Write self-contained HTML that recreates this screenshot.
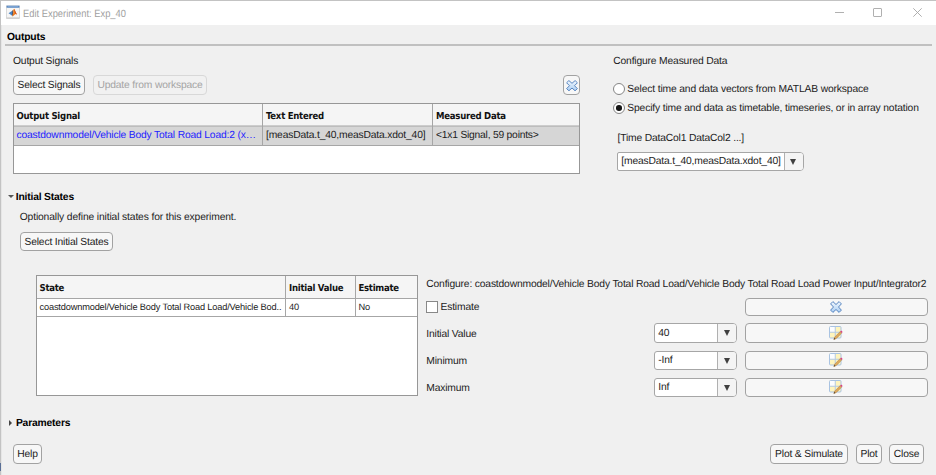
<!DOCTYPE html>
<html><head><meta charset="utf-8">
<style>
html,body{margin:0;padding:0;}
body{text-rendering:geometricPrecision;width:936px;height:475px;background:#f0f0f0;position:relative;overflow:hidden;font-family:"Liberation Sans",sans-serif;font-size:10.3px;letter-spacing:-0.17px;color:#1c1c1c;}
.abs{position:absolute;white-space:nowrap;line-height:12px;}
.b{font-weight:bold;color:#000;}
.btn{position:absolute;box-sizing:border-box;border:1px solid #a2a2a2;border-radius:4px;background:#f7f7f7;text-align:center;white-space:nowrap;color:#1c1c1c;}
.btn span{position:absolute;left:0;right:0;line-height:12px;}
.btn.dis{border-color:#d8d8d8;color:#a4a4a4;background:#f1f1f1;}
.tbl{position:absolute;box-sizing:border-box;border:1px solid #979797;background:#fff;}
.th{position:absolute;font-family:"DejaVu Sans Condensed","DejaVu Sans","Liberation Sans",sans-serif;font-weight:bold;font-size:9.5px;letter-spacing:-0.25px;color:#111;white-space:nowrap;line-height:12px;}
.vl{position:absolute;width:1px;background:#a6a6a6;}
.hl{position:absolute;height:1px;background:#a6a6a6;}
.combo{position:absolute;box-sizing:border-box;border:1px solid #a6a6a6;border-radius:3px 4px 4px 3px;background:#fff;overflow:hidden;}
.combo .dv{position:absolute;top:0;bottom:0;right:0;width:18px;border-left:1px solid #b0b0b0;background:#f4f4f4;}
.combo .ar{position:absolute;width:0;height:0;border-left:3.8px solid transparent;border-right:3.8px solid transparent;border-top:6.2px solid #404040;}
.combo .tx{position:absolute;left:3.3px;line-height:12px;white-space:nowrap;}
.radio{position:absolute;box-sizing:border-box;width:12px;height:12px;border:1px solid #858585;border-radius:50%;background:#fff;}
</style></head><body>
<!-- title bar -->
<div style="position:absolute;left:0;top:0;width:936px;height:25px;background:#fff;"></div>
<div style="position:absolute;left:0;top:0;width:936px;height:1px;background:#c3c3c3;"></div>
<div style="position:absolute;left:0;top:0;width:1px;height:475px;background:#c3c3c3;"></div>
<div style="position:absolute;left:1px;top:25px;width:1px;height:450px;background:#e6e6e6;"></div>
<div style="position:absolute;left:0;top:463px;width:1px;height:8px;background:#5a6f96;"></div>
<svg style="position:absolute;left:6px;top:5px" width="14" height="14" viewBox="0 0 14 14">
<rect x="0.5" y="0.9" width="13" height="12.4" fill="#f6f6f6" stroke="#d2d2d2" stroke-width="0.8"/>
<rect x="0.6" y="12.6" width="12.8" height="0.8" fill="#bdbdbd"/>
<rect x="0.6" y="0.7" width="12.8" height="2" fill="#4f80bd"/>
<rect x="1.6" y="1.3" width="10.6" height="0.6" fill="#93b7e3"/>
<path d="M2.5 8.2 L6.3 5.8 L7.2 7.5 L6 10.8 L4.5 9.4 Z" fill="#4a84c4"/>
<path d="M6.3 5.8 L7.3 4.8 L7.3 8 L6.4 11.2 L6 10.8 L6.6 7.6 Z" fill="#4a2f22"/>
<path d="M7.3 4.8 L8.4 3.7 L9.4 6.5 L10.9 9.6 L9.5 9 L8 10.2 L6.6 11.5 L6.4 11.2 L7.3 8 Z" fill="#ec7a1c"/>
<path d="M8.4 3.7 L9.4 6.5 L10.9 9.6 L9.7 9 L8.8 6.6 Z" fill="#c9441c"/>
</svg>
<div class="abs" id="title" style="left:23px;top:8px;font-size:10.5px;letter-spacing:0;color:#a0a0a0;transform:scaleX(0.891);transform-origin:0 50%;">Edit Experiment: Exp_40</div>
<!-- window controls -->
<div style="position:absolute;left:835px;top:12px;width:9px;height:1px;background:#b0b0b0;"></div>
<div style="position:absolute;left:873px;top:8px;width:9px;height:9px;box-sizing:border-box;border:1px solid #b0b0b0;border-radius:1px;"></div>
<svg style="position:absolute;left:913px;top:8px" width="9" height="9" viewBox="0 0 9 9"><path d="M0.3 0.3 L8.7 8.7 M8.7 0.3 L0.3 8.7" stroke="#a6a6a6" stroke-width="0.9" fill="none"/></svg>

<!-- Outputs -->
<div class="abs b" style="left:7px;top:32px;">Outputs</div>
<div style="position:absolute;left:5px;top:44px;width:927px;height:2px;background:#c0c0c0;"></div>
<div class="abs" style="left:13px;top:56px;">Output Signals</div>
<div class="btn" style="left:13px;top:75px;width:72px;height:20px;"><span style="top:4px">Select Signals</span></div>
<div class="btn dis" style="left:93px;top:75px;width:114px;height:20px;"><span style="top:4px">Update from workspace</span></div>
<div class="btn" style="left:563px;top:75px;width:17px;height:20px;">
<svg style="position:absolute;left:1.7px;top:3.7px" width="12" height="11.4" viewBox="0 0 12 12" preserveAspectRatio="none"><defs><linearGradient id="xg" x1="0" y1="0" x2="0" y2="1"><stop offset="0" stop-color="#f2f8fe"/><stop offset="1" stop-color="#a9cdf2"/></linearGradient></defs><path d="M2.9 0.6 L6 3.5 L9.1 0.6 L11.4 2.9 L8.5 6 L11.4 9.1 L9.1 11.4 L6 8.5 L2.9 11.4 L0.6 9.1 L3.5 6 L0.6 2.9 Z" fill="url(#xg)" stroke="#5583bf" stroke-width="1" stroke-linejoin="round"/></svg>
</div>

<!-- table 1 -->
<div class="tbl" style="left:13px;top:103px;width:567px;height:71px;"></div>
<div style="position:absolute;left:14px;top:104px;width:565px;height:22px;background:#f5f5f5;"></div>
<div style="position:absolute;left:14px;top:126px;width:565px;height:19px;background:#d6d6d6;"></div>
<div class="hl" style="left:14px;top:125px;width:565px;background:#cdcdcd"></div><div class="hl" style="left:14px;top:126px;width:565px;background:#bdbdbd"></div>
<div class="hl" style="left:14px;top:145px;width:565px;"></div>
<div class="vl" style="left:262px;top:104px;height:42px;"></div>
<div class="vl" style="left:432px;top:104px;height:42px;"></div>
<div class="th" style="left:16.5px;top:111px;">Output Signal</div>
<div class="th" style="left:266px;top:111px;">Text Entered</div>
<div class="th" style="left:436px;top:111px;">Measured Data</div>
<div class="abs" style="left:16.5px;top:130px;color:#1d1dff;">coastdownmodel/Vehicle Body Total Road Load:2 (x…</div>
<div class="abs" style="left:266px;top:130px;">[measData.t_40,measData.xdot_40]</div>
<div class="abs" style="left:436px;top:130px;letter-spacing:-0.22px">&lt;1x1 Signal, 59 points&gt;</div>

<!-- Configure measured data -->
<div class="abs" style="left:613.3px;top:56px;">Configure Measured Data</div>
<div class="radio" style="left:613px;top:83px;"></div>
<div class="abs" style="left:627.3px;top:84px;letter-spacing:-0.15px">Select time and data vectors from MATLAB workspace</div>
<div class="radio" style="left:613px;top:102px;"><div style="position:absolute;left:2.2px;top:2.2px;width:5.6px;height:5.6px;border-radius:50%;background:#161616;"></div></div>
<div class="abs" style="left:627.3px;top:103px;letter-spacing:-0.15px">Specify time and data as timetable, timeseries, or in array notation</div>
<div class="abs" style="left:617.5px;top:133px;">[Time DataCol1 DataCol2 ...]</div>
<div class="combo" style="left:617px;top:152px;width:187px;height:19px;border-radius:2px 4px 4px 2px;"><div class="tx" style="top:3px">[measData.t_40,measData.xdot_40]</div><div class="dv"></div><div class="ar" style="left:172.4px;top:5.7px;"></div></div>

<!-- Initial States -->
<div style="position:absolute;left:7.5px;top:195px;width:0;height:0;border-left:3px solid transparent;border-right:3px solid transparent;border-top:3.5px solid #555;"></div>
<div class="abs b" style="left:15.7px;top:192px;">Initial States</div>
<div class="abs" style="left:19.7px;top:212px;letter-spacing:-0.135px">Optionally define initial states for this experiment.</div>
<div class="btn" style="left:20px;top:232px;width:93px;height:19px;"><span style="top:4px">Select Initial States</span></div>

<!-- table 2 -->
<div class="tbl" style="left:36px;top:275px;width:382px;height:121px;"></div>
<div style="position:absolute;left:37px;top:276px;width:380px;height:22px;background:#f5f5f5;"></div>
<div class="hl" style="left:37px;top:298px;width:380px;"></div>
<div class="hl" style="left:37px;top:316px;width:380px;"></div>
<div class="vl" style="left:285px;top:276px;height:41px;"></div>
<div class="vl" style="left:355px;top:276px;height:41px;"></div>
<div class="th" style="left:39.5px;top:283px;">State</div>
<div class="th" style="left:289px;top:283px;">Initial Value</div>
<div class="th" style="left:358.4px;top:283px;">Estimate</div>
<div class="abs s" style="left:39.5px;top:301px;font-size:9.26px;letter-spacing:-0.175px;">coastdownmodel/Vehicle Body Total Road Load/Vehicle Bod..</div>
<div class="abs s" style="left:289px;top:301px;font-size:9.26px;letter-spacing:-0.175px;">40</div>
<div class="abs s" style="left:358.4px;top:301px;font-size:9.26px;letter-spacing:-0.175px;">No</div>

<!-- Configure state -->
<div class="abs" style="left:426.3px;top:279px;">Configure: coastdownmodel/Vehicle Body Total Road Load/Vehicle Body Total Road Load Power Input/Integrator2</div>
<div style="position:absolute;left:426px;top:301px;width:12px;height:12px;box-sizing:border-box;border:1px solid #888;background:#fff;"></div>
<div class="abs" style="left:440.5px;top:302px;">Estimate</div>
<div class="abs" style="left:426.3px;top:329px;">Initial Value</div>
<div class="abs" style="left:426.3px;top:356px;">Minimum</div>
<div class="abs" style="left:426.3px;top:383px;">Maximum</div>

<div class="combo" style="left:654px;top:323px;width:83px;height:20px;"><div class="tx" style="top:4px">40</div><div class="dv"></div><div class="ar" style="left:68.6px;top:6.2px;"></div></div>
<div class="combo" style="left:654px;top:351px;width:83px;height:19px;"><div class="tx" style="top:3px">-Inf</div><div class="dv"></div><div class="ar" style="left:68.6px;top:5.7px;"></div></div>
<div class="combo" style="left:654px;top:378px;width:83px;height:19px;"><div class="tx" style="top:3px">Inf</div><div class="dv"></div><div class="ar" style="left:68.6px;top:5.7px;"></div></div>

<div class="btn" style="left:745px;top:298px;width:183px;height:18px;">
<svg style="position:absolute;left:84.2px;top:2.1px" width="12" height="12" viewBox="0 0 12 12"><path d="M2.9 0.6 L6 3.5 L9.1 0.6 L11.4 2.9 L8.5 6 L11.4 9.1 L9.1 11.4 L6 8.5 L2.9 11.4 L0.6 9.1 L3.5 6 L0.6 2.9 Z" fill="url(#xg)" stroke="#5583bf" stroke-width="1" stroke-linejoin="round"/></svg>
</div>
<div class="btn" style="left:745px;top:323px;width:183px;height:20px;"><svg class="ed" style="position:absolute;left:82.3px;top:1.4px" width="16" height="16" viewBox="0 0 16 16"><use href="#edit"/></svg></div>
<div class="btn" style="left:745px;top:351px;width:183px;height:19px;"><svg class="ed" style="position:absolute;left:82.3px;top:0.1px" width="16" height="16" viewBox="0 0 16 16"><use href="#edit"/></svg></div>
<div class="btn" style="left:745px;top:378px;width:183px;height:19px;"><svg class="ed" style="position:absolute;left:82.3px;top:0.1px" width="16" height="16" viewBox="0 0 16 16"><use href="#edit"/></svg></div>
<svg width="0" height="0" style="position:absolute"><defs><g id="edit">
<rect x="1.5" y="1.5" width="11.5" height="11.5" rx="1" fill="#fff5bd" stroke="#a9c3e2" stroke-width="1"/>
<rect x="2" y="2" width="5" height="5" fill="#fcfdff"/>
<path d="M7.25 2 V12.5 M2 7.25 H12.5" stroke="#b4cae6" stroke-width="1" fill="none"/>
<path d="M5.8 14.5 L6.6 12.2 L12.2 6.6 L13.7 8.1 L8.1 13.7 Z" fill="#dfa95c" stroke="#a87a3c" stroke-width="0.5"/>
<path d="M12.2 6.6 L13.2 5.6 L14.7 7.1 L13.7 8.1 Z" fill="#db3f7d"/>
<path d="M5.8 14.5 L6.3 13 L7.3 14 Z" fill="#2e2e2e"/>
</g></defs></svg>

<!-- Parameters -->
<div style="position:absolute;left:8.5px;top:419.5px;width:0;height:0;border-top:3px solid transparent;border-bottom:3px solid transparent;border-left:3.7px solid #444;"></div>
<div class="abs b" style="left:15.9px;top:418px;">Parameters</div>
<div class="btn" style="left:13px;top:444px;width:29px;height:20px;"><span style="top:4px">Help</span></div>
<div class="btn" style="left:770px;top:444px;width:78px;height:20px;"><span style="top:4px">Plot &amp; Simulate</span></div>
<div class="btn" style="left:856px;top:444px;width:26px;height:20px;"><span style="top:4px">Plot</span></div>
<div class="btn" style="left:889px;top:444px;width:35px;height:20px;"><span style="top:4px">Close</span></div>
</body></html>
